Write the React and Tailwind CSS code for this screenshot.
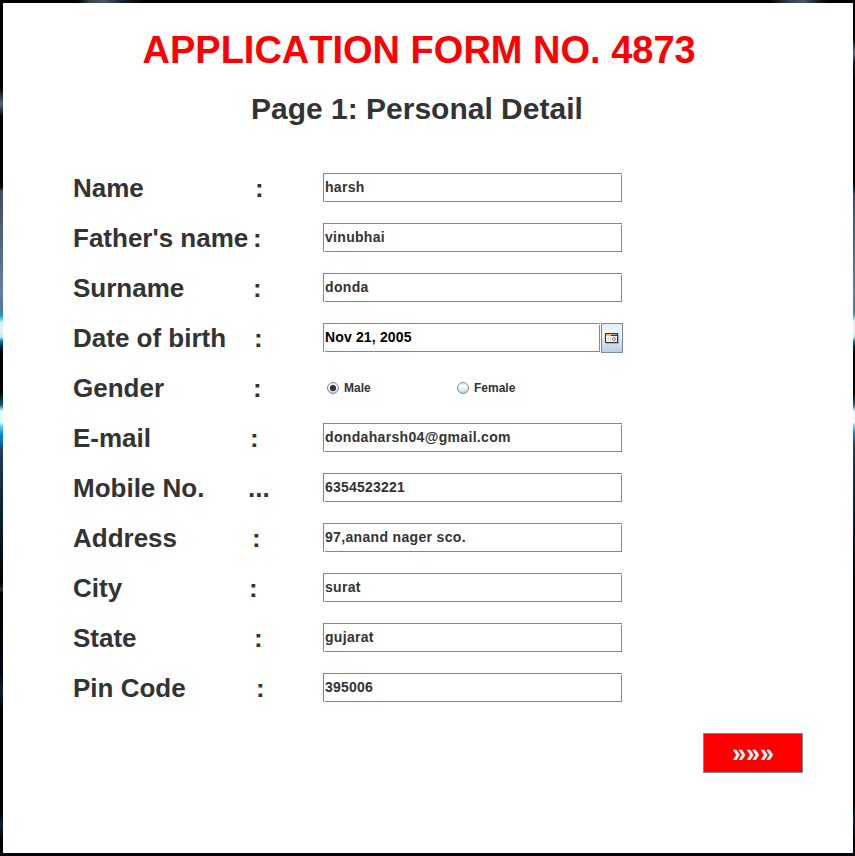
const ink = "text-[#333333]";

const rows = [
  { label: "Name", mark: ":", gap: "w-[182px]", value: "harsh", track: "tracking-[0.3px]" },
  { label: "Father's name", mark: ":", gap: "w-[180px]", value: "vinubhai", track: "tracking-[0.3px]" },
  { label: "Surname", mark: ":", gap: "w-[180px]", value: "donda", track: "tracking-[0.35px]" },
  { label: "Date of birth", mark: ":", gap: "w-[181px]", value: "Nov 21, 2005", kind: "date", track: "tracking-[0.15px]" },
  { label: "Gender", mark: ":", gap: "w-[180px]", kind: "radio" },
  { label: "E-mail", mark: ":", gap: "w-[177px]", value: "dondaharsh04@gmail.com", track: "tracking-[0.33px]" },
  { label: "Mobile No.", mark: "...", gap: "w-[175px]", value: "6354523221", track: "tracking-[0.22px]" },
  { label: "Address", mark: ":", gap: "w-[179px]", value: "97,anand nager sco.", track: "tracking-[0.33px]" },
  { label: "City", mark: ":", gap: "w-[176px]", value: "surat", track: "tracking-[0.3px]" },
  { label: "State", mark: ":", gap: "w-[181px]", value: "gujarat", track: "tracking-[0.3px]" },
  { label: "Pin Code", mark: ":", gap: "w-[183px]", value: "395006", track: "tracking-[0.22px]" },
];

function Field({ value, width, color, track }) {
  return (
    <div className={`relative h-[29px] ${width} border border-[#7a8a99] bg-white`}>
      <span className={`block pl-px text-[14px] leading-[27px] whitespace-pre ${color} ${track}`}>{value}</span>
      <i className="absolute -bottom-px left-0 size-px bg-white" />
      <i className="absolute top-0 -right-px size-px bg-white" />
    </div>
  );
}

function CalendarButton() {
  return (
    <button className="ml-px flex h-[30px] w-[22px] items-center justify-center border border-[#7a8a99] bg-gradient-to-b from-[#e4edf5] via-[#f0f5fa] via-30% to-[#b8cfe5]">
      <svg width="14" height="11" viewBox="0 0 14 11" shapeRendering="crispEdges">
        <path d="M1 1h13v10H1z" fill="#a9b3bd" />
        <path d="M0 0h13v10H0z" fill="#333" />
        <path d="M1 1h5v2H1z" fill="#ffb83d" />
        <path d="M6 1h6v1H6z" fill="#8fb4dc" />
        <path d="M1 3h11v6H1z" fill="#f4f4f4" />
        <path d="M3 4h1v4H3zM5 4h1v4H5z" fill="#d8d8d8" />
        <circle cx="9" cy="6" r="1.5" fill="none" stroke="#ee5555" shapeRendering="auto" />
      </svg>
    </button>
  );
}

function Radio({ label, id, checked }) {
  return (
    <div className={`flex w-[130px] items-center gap-[5px] text-[12px] leading-[14px] ${ink}`}>
      <svg width="12" height="12" viewBox="0 0 12 12">
        <defs>
          <linearGradient id={id} x1="0" y1="0" x2="0" y2="1">
            <stop offset="0" stopColor="#dde8f3" />
            <stop offset="0.35" stopColor="#ffffff" />
            <stop offset="1" stopColor="#b8cfe5" />
          </linearGradient>
        </defs>
        <circle cx="6" cy="6" r="5.5" fill={`url(#${id})`} stroke="#7a8a99" />
        {checked && <circle cx="6" cy="6" r="3.1" fill="#333" />}
      </svg>
      <span>{label}</span>
    </div>
  );
}

function Row({ row }) {
  return (
    <div className="flex h-[50px] items-start">
      <div className={`flex w-[250px] text-[26px] leading-[30px] whitespace-pre ${ink}`}>
        <span className={`${row.gap} shrink-0`}>{row.label}</span>
        <span>{row.mark}</span>
      </div>
      {row.kind === "radio" ? (
        <div className="flex h-[30px] items-center pl-1">
          <Radio label="Male" id="male" checked />
          <Radio label="Female" id="female" />
        </div>
      ) : row.kind === "date" ? (
        <div className="flex">
          <Field value={row.value} width="w-[277px]" color="text-black" track={row.track} />
          <CalendarButton />
        </div>
      ) : (
        <Field value={row.value} width="w-[299px]" color={ink} track={row.track} />
      )}
    </div>
  );
}

export default function App() {
  return (
    <div className="flex h-[856px] w-[855px] flex-col overflow-hidden bg-black font-['Liberation_Sans',Arial,sans-serif] font-bold [font-kerning:none]">
      <div className="h-[3px] shrink-0 bg-[linear-gradient(90deg,#000_78px,#39424f_90px,#4a5566_104px,#151b24_125px,#000_145px,#000_770px,#39424f_790px,#4a5566_803px,#151b24_818px,#000_830px)]" />
      <div className="flex h-[850px] shrink-0">
        <div className="w-[3px] shrink-0 bg-[linear-gradient(180deg,#000_85px,#5a6472_101px,#333b46_106px,#000_114px,#000_184px,#3d4d60_188px,#45586e_210px,#6080a8_290px,#4c7a90_307px,#25a0c8_313px,#d0f8ff_320px,#f0eeee_329px,#b0f0ff_334px,#0080b0_338px,#002040_344px,#000_352px,#000_390px,#106080_402px,#e0ffff_408px,#e0ffff_419px,#50c8f0_424px,#0088d8_432px,#0070b8_440px,#1f4060_446px,#183450_465px,#052a3a_497px,#001018_550px,#000_580px,#2a2f38_587px,#000_590px,#000814_670px,#0a2032_690px,#000_705px,#000_810px,#0a2032_820px,#000_840px)]" />
        <main className="flex w-[850px] shrink-0 flex-col bg-white">
          <h1 className="mt-[25px] pl-[139.5px] text-[38px] leading-[44px] whitespace-pre text-[#ff0000]">APPLICATION FORM NO. 4873</h1>
          <h2 className={`mt-[20px] pl-[248px] text-[30px] leading-[34px] whitespace-pre ${ink}`}>Page 1: Personal Detail</h2>
          <div className="mt-[47px] flex flex-col pl-[70px]">
            {rows.map((row) => (
              <Row key={row.label} row={row} />
            ))}
          </div>
          <button className="mt-[10px] mr-[50px] h-[40px] w-[100px] self-end border border-[#7a8a99] bg-[#ff0000] text-[25px] leading-[38px] text-white">»»»</button>
        </main>
        <div className="w-[2px] shrink-0 bg-[linear-gradient(180deg,#000_35px,#2c3440_42px,#5a6472_50px,#111722_60px,#000_75px,#000_180px,#102030_186px,#3d4d60_192px,#6080a8_290px,#4c7a90_307px,#25a0b8_312px,#d0f8ff_318px,#f0eeee_329px,#b0f0ff_334px,#0080b0_338px,#002040_344px,#000_352px,#000_390px,#106080_402px,#e0ffff_408px,#e0ffff_419px,#50c8f0_424px,#0088d8_430px,#0070b8_436px,#1f4060_442px,#183450_465px,#052a3a_497px,#001018_550px,#000_580px,#000_800px,#0a2032_815px,#000_840px)]" />
      </div>
      <div className="h-[3px] shrink-0 bg-[#02040a]" />
    </div>
  );
}
